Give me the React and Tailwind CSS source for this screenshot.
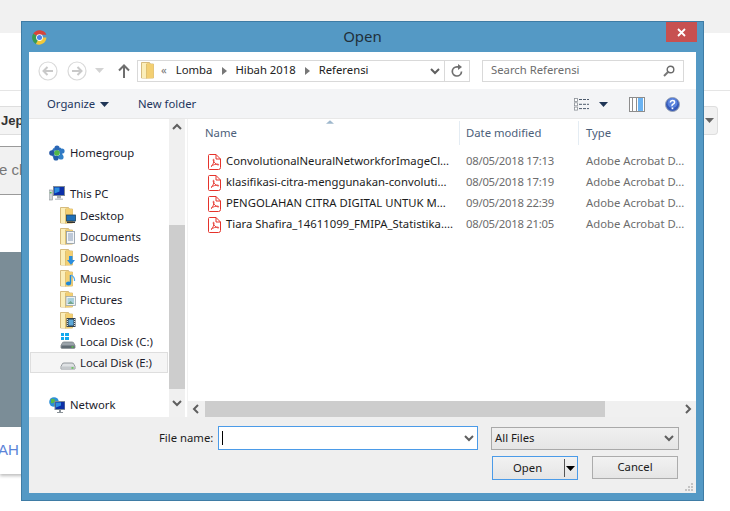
import React from "react";

const Chevron = ({ dir = "down", className = "" }) => {
  const d = { down: "M1 3l4 4 4-4", up: "M1 7l4-4 4 4", left: "M7 1L3 5l4 4", right: "M3 1l4 4-4 4" }[dir];
  return (
    <svg width="10" height="10" viewBox="0 0 10 10" className={`shrink-0 ${className}`}>
      <path d={d} fill="none" stroke="#5f5f5f" strokeWidth="2" />
    </svg>
  );
};

const Caret = ({ color = "#1f3556", w = 9 }) => (
  <svg width={w} height="5" viewBox="0 0 9 5" className="shrink-0">
    <path d="M0 0h9L4.500 5z" fill={color} />
  </svg>
);

const Chrome = () => (
  <svg width="15" height="15" viewBox="0 0 16 16">
    <path d="M8 8L1.300 4A8 8 0 0 1 15.400 5H8z" fill="#d8443a" />
    <path d="M8 8l-3.900 7A8 8 0 0 1 1.300 4z" fill="#3a9b4e" />
    <path d="M8 8h7.400A8 8 0 0 1 4.100 15z" fill="#f1c83a" />
    <circle cx="8" cy="8" r="3.600" fill="#fff" />
    <circle cx="8" cy="8" r="2.700" fill="#4a83ea" />
  </svg>
);

const NavCircle = ({ flip }) => (
  <svg width="20" height="20" viewBox="0 0 20 20" style={flip ? { transform: "scaleX(-1)" } : undefined}>
    <circle cx="10" cy="10" r="9" fill="#fff" stroke="#d9d9d9" strokeWidth="1.200" />
    <path d="M15 10H6M9.500 6L5.500 10l4 4" fill="none" stroke="#c9c9c9" strokeWidth="2" />
  </svg>
);

const Folder = ({ children }) => (
  <svg width="16" height="17" viewBox="0 0 16 17" className="shrink-0">
    <path d="M.5.5h8l1 1.500h3v14h-12z" fill="#efd07f" stroke="#cdb06c" strokeWidth=".8" />
    <rect x="1" y="1" width="4.500" height="15" fill="#fbeeb9" />
    <path d="M5.500 2l7-.0v14l-7 .500z" fill="#f3cf72" />
    <path d="M5.500 2v14.500" stroke="#d6b768" strokeWidth=".7" />
    {children}
  </svg>
);

const overlays = {
  Desktop: (
    <g>
      <rect x="6.500" y="8" width="9" height="6" fill="#1f6fb8" stroke="#20455f" strokeWidth=".8" />
      <rect x="7" y="14.500" width="8" height="1.500" fill="#333" />
    </g>
  ),
  Documents: (
    <g>
      <rect x="6.500" y="3.500" width="8" height="12" fill="#f4f6f8" stroke="#8d99a5" strokeWidth=".8" />
      <path d="M8 6h5M8 8h5M8 10h5M8 12h5" stroke="#6c86a6" strokeWidth=".8" />
    </g>
  ),
  Downloads: <path d="M9 7h3.500v4H15l-4 5-4-5h2z" fill="#2b8ddd" />,
  Music: (
    <g>
      <path d="M10.500 5v8" stroke="#1e88d8" strokeWidth="1.500" />
      <path d="M11 5q4 2 3.500 6" stroke="#4eaaf0" strokeWidth="1.200" fill="none" />
      <ellipse cx="8.500" cy="13.500" rx="2.600" ry="2" fill="#1e88d8" />
    </g>
  ),
  Pictures: (
    <g>
      <rect x="6" y="5.500" width="9.500" height="9" fill="#eef2f3" stroke="#9aa6ad" strokeWidth=".8" />
      <rect x="7.500" y="7" width="6.500" height="6" fill="#a8cfdc" />
      <path d="M7.500 13l3-3 3.500 3z" fill="#74a58b" />
    </g>
  ),
  Videos: (
    <g>
      <rect x="6.500" y="6" width="9" height="9" fill="#33424f" />
      <rect x="8.500" y="7.500" width="5" height="6" fill="#5da8d8" />
      <path d="M7.400 7v7M14.600 7v7" stroke="#fff" strokeWidth=".9" strokeDasharray="1 1" />
    </g>
  ),
};

const Drive = ({ win }) => (
  <svg width="16" height="17" viewBox="0 0 16 17" className="shrink-0">
    {win && <path d="M1 0h3v3H1zM5 0h4v3H5zM1 4h3v3H1zM5 4h4v3H5z" fill="#12a9ee" />}
    <path d="M2 10.500q.3-1.500 2-1.500h8q1.700 0 2 1.500l1 2v2.500H1v-2.500z" fill={win ? "#9aa3aa" : "#dfe2e4"} stroke="#7c8388" strokeWidth=".8" />
    <rect x="1.400" y="12.500" width="13.200" height="3" fill={win ? "#5f6b73" : "#c4c8cb"} />
    <rect x="11.500" y="13.200" width="2" height="1.500" fill="#5cc24e" />
  </svg>
);

const Homegroup = () => (
  <svg width="16" height="16" viewBox="0 0 16 16" className="shrink-0">
    <path d="M5 4.500L11 4l1.500 7L6 13 3 8z" fill="none" stroke="#2f78c0" strokeWidth="2.400" />
    <circle cx="8" cy="3" r="2.600" fill="#2a66b5" />
    <circle cx="13" cy="6" r="2.600" fill="#2f78c4" />
    <circle cx="3" cy="8" r="2.800" fill="#2557a5" />
    <circle cx="12" cy="12" r="2.600" fill="#3080c8" />
    <circle cx="7" cy="13" r="2.600" fill="#235ea8" />
    <circle cx="8" cy="8" r="2.800" fill="#52b848" />
  </svg>
);

const PC = () => (
  <svg width="16" height="15" viewBox="0 0 16 15" className="shrink-0">
    <rect x="0" y="4" width="3.500" height="10" fill="#cfd3d6" stroke="#8a9095" strokeWidth=".6" />
    <rect x=".8" y="6" width="1.800" height="1.400" fill="#58c04e" />
    <rect x="4.500" y="0.500" width="11" height="9" fill="#0b2fa8" stroke="#7f8b96" />
    <path d="M5.500 1.500h5v4l-5 2z" fill="#2d8fe0" />
    <path d="M8 10h4v2.500H8z" fill="#a8aeb3" />
    <rect x="6" y="12.500" width="8" height="1.500" fill="#c6cacd" />
  </svg>
);

const Network = () => (
  <svg width="16" height="16" viewBox="0 0 16 16" className="shrink-0">
    <circle cx="5" cy="5" r="4.800" fill="#2c8fd8" />
    <path d="M2 2q3-1 4 1t-2 3-2-1zM6 6q3 0 2 3H5z" fill="#58b84a" />
    <rect x="6" y="4.500" width="10" height="8" fill="#0c2fa6" stroke="#7d8a96" />
    <path d="M7 5.500h5v3l-5 2z" fill="#2e8de0" />
    <path d="M10 12.500h2V15h-2zM8 15h6v1H8z" fill="#8b9298" />
  </svg>
);

const Pdf = () => (
  <svg width="13" height="16" viewBox="0 0 13 16" className="shrink-0">
    <path d="M1.500.5h6.500l4.500 4.500v8.500a2 2 0 0 1-2 2h-9a1 1 0 0 1-1-1V1.500a1 1 0 0 1 1-1z" fill="#fff" stroke="#e5332b" />
    <path d="M8 .5V5h4.500" fill="none" stroke="#e5332b" />
    <path d="M3 12.500c1.500-.8 3-4 3-6.500 0-1-1-1-.9 0C5.300 8 8 10.500 10 11c1 .2 1-.8 0-.9-2-.2-5.500.8-7 2.400z" fill="none" stroke="#e5332b" strokeWidth=".9" />
  </svg>
);

const NavRow = ({ icon, label, indent, selected, className = "" }) => (
  <div
    className={`flex h-[21px] items-center ${indent ? "pl-[30px]" : "pl-[19px]"} ${
      selected ? "bg-[#f5f5f5] outline outline-[#dedede] -outline-offset-1" : ""
    } ${className}`}
  >
    <div className={`flex ${indent ? "w-[20px]" : "w-[21px]"} shrink-0 items-center`}>{icon}</div>
    <span className="text-[11.3px] leading-none whitespace-nowrap text-[#1b1b2b]">{label}</span>
  </div>
);

const files = [
  ["ConvolutionalNeuralNetworkforImageCl...", "08/05/2018 17:13"],
  ["klasifikasi-citra-menggunakan-convoluti...", "08/05/2018 17:19"],
  ["PENGOLAHAN CITRA DIGITAL UNTUK M...", "09/05/2018 22:39"],
  ["Tiara Shafira_14611099_FMIPA_Statistika....", "08/05/2018 21:05"],
];

const Arrow = ({ className = "" }) => (
  <svg width="5" height="8" viewBox="0 0 5 8" className={`shrink-0 ${className}`}>
    <path d="M0 0l5 4-5 4z" fill="#777" />
  </svg>
);

export default function App() {
  return (
    <div className="relative h-[511px] w-[730px] overflow-hidden bg-white font-['Noto_Sans','Open_Sans',sans-serif]">
      {/* Page behind the dialog */}
      <div className="h-[33px] bg-[#f1f1f1]" />
      <div className="h-[58px] border-b border-[#e5e5e5]" />
      <div className="mt-[15px] flex h-[29px] w-[718px]">
        <div className="flex flex-1 items-center border-y border-[#dedede] bg-[#f4f4f4] pl-[1px] font-['Liberation_Sans'] text-[13px] font-bold text-[#333]">
          Jep
        </div>
        <div className="flex w-[14px] items-center justify-end rounded-r border-y border-r border-[#dedede] bg-[#f1f1f1] pr-[3px]">
          <Caret color="#666" />
        </div>
      </div>
      <div className="mt-[11px] flex h-[49px] w-[690px] items-center border-y border-[#9a9a9a] bg-[#f1f1f1] font-['Liberation_Sans'] text-[15px] text-[#777]">
        <span className="-ml-[1px]">e ch</span>
      </div>
      <div className="mt-[57px] h-[175px] w-[690px] bg-[#7b8d97]" />
      <div className="flex h-[47px] w-[690px] items-center font-['Liberation_Sans'] text-[15px] text-[#5b84d8] shadow-[0_2px_3px_rgba(0,0,0,0.25)]">
        <span className="-ml-[2px]">AH</span>
      </div>

      {/* Dialog window */}
      <div className="absolute top-[21px] left-[21px] flex h-[480px] w-[683px] flex-col border border-[#3f7ca5] bg-[#5499c5] px-[7px] pb-[7px]">
        <div className="relative flex h-[30px] shrink-0 items-center">
          <div className="ml-[3px] flex"><Chrome /></div>
          <div className="absolute inset-x-0 top-[4px] text-center text-[15px] leading-[20px] text-[#21303b]">Open</div>
          <div className="absolute top-0 right-[-1px] flex h-[20px] w-[31px] items-center justify-center bg-[#c75050]">
            <svg width="9" height="9" viewBox="0 0 9 9">
              <path d="M1 1l7 7M8 1L1 8" stroke="#fff" strokeWidth="1.800" />
            </svg>
          </div>
        </div>

        <div className="flex min-h-0 flex-1 flex-col bg-[#efefef]">
          {/* Navigation row */}
          <div className="flex h-[37px] shrink-0 items-center bg-white">
            <div className="ml-[9px] flex"><NavCircle /></div>
            <div className="ml-[9px] flex"><NavCircle flip /></div>
            <div className="ml-[8px] flex"><Caret color="#d3d3d3" /></div>
            <svg width="12" height="14" viewBox="0 0 12 14" className="ml-[14px] shrink-0">
              <path d="M6 14V2M1 6.500L6 1.500l5 5" fill="none" stroke="#6e6e6e" strokeWidth="2" />
            </svg>
            <div className="ml-[7px] flex h-[22px] w-[333px] shrink-0 items-center border border-[#d9d9d9] text-[11.3px] text-[#222]">
              <div className="ml-[3px] flex"><Folder /></div>
              <span className="ml-[4px] text-[#777]">«</span>
              <span className="ml-[9px]">Lomba</span>
              <Arrow className="ml-[10px]" />
              <span className="ml-[8px]">Hibah 2018</span>
              <Arrow className="ml-[9px]" />
              <span className="ml-[9px]">Referensi</span>
              <Chevron className="mr-[4px] ml-auto" />
              <div className="flex h-full w-[25px] shrink-0 items-center justify-center border-l border-[#d9d9d9]">
                <svg width="12" height="13" viewBox="0 0 12 13">
                  <path d="M10.500 7.500A4.600 4.600 0 1 1 6 2.800h2" fill="none" stroke="#6f6f6f" strokeWidth="1.700" />
                  <path d="M7 0l4 3-4 3z" fill="#6f6f6f" />
                </svg>
              </div>
            </div>
            <div className="ml-[12px] flex h-[22px] w-[202px] shrink-0 items-center justify-between border border-[#d9d9d9] px-[8px]">
              <span className="text-[11.3px] text-[#6d6d6d]">Search Referensi</span>
              <svg width="12" height="12" viewBox="0 0 12 12">
                <circle cx="7.500" cy="4.500" r="3.300" fill="none" stroke="#6a6a6a" strokeWidth="1.400" />
                <path d="M5 7l-4 4" stroke="#777" strokeWidth="2" />
              </svg>
            </div>
          </div>

          {/* Toolbar */}
          <div className="flex h-[30px] shrink-0 items-center border-b border-[#e8e8e8] bg-[#f3f4f6] pt-[1px]">
            <span className="ml-[18px] w-[53px] text-[11.3px] text-[#23375e]">Organize</span>
            <Caret />
            <span className="ml-[29px] text-[11.3px] text-[#23375e]">New folder</span>
            <svg width="15" height="13" viewBox="0 0 15 13" className="ml-auto shrink-0">
              <rect x=".5" y=".5" width="3" height="3" fill="#fff" stroke="#8a8f96" strokeWidth=".8" />
              <rect x=".5" y="4.800" width="3" height="3" fill="#fff" stroke="#8a8f96" strokeWidth=".8" />
              <rect x=".5" y="9.100" width="3" height="3" fill="#fff" stroke="#8a8f96" strokeWidth=".8" />
              <path d="M5 1.500h10M5 6.300h10M5 10.600h10" stroke="#4d5a6c" strokeDasharray="3 1" />
            </svg>
            <div className="ml-[10px] flex"><Caret /></div>
            <div className="relative ml-[21px] flex h-[15px] w-[16px] border border-[#8d8d8d] bg-white">
              <div className="ml-[2px] h-full w-[1px] bg-[#8d8d8d]" />
              <div className="ml-[3px] h-full w-[1px] bg-[#8d8d8d]" />
              <div className="ml-[1px] h-full w-[5px] bg-[#6bb3f2]" />
            </div>
            <svg width="15" height="15" viewBox="0 0 15 15" className="mr-[16px] ml-[20px] shrink-0">
              <circle cx="7.500" cy="7.500" r="7" fill="#3559b8" stroke="#9aa5b5" />
              <circle cx="7.500" cy="6" r="5" fill="#5a83dd" />
              <path d="M5.300 5.500q.3-2 2.300-2t2 1.700q0 1.200-1.500 2t-.8 1.800" fill="none" stroke="#fff" strokeWidth="1.500" />
              <rect x="6.600" y="10.500" width="1.700" height="1.700" fill="#fff" />
            </svg>
          </div>

          {/* Main area */}
          <div className="flex h-[298px] shrink-0 bg-white">
            <div className="flex w-[140px] shrink-0 flex-col pt-[23px] pr-[1px] pl-[1px]">
              <NavRow icon={<Homegroup />} label="Homegroup" />
              <NavRow icon={<PC />} label="This PC" className="mt-[20px] mb-[1px]" />
              <NavRow indent icon={<Folder>{overlays.Desktop}</Folder>} label="Desktop" />
              <NavRow indent icon={<Folder>{overlays.Documents}</Folder>} label="Documents" />
              <NavRow indent icon={<Folder>{overlays.Downloads}</Folder>} label="Downloads" />
              <NavRow indent icon={<Folder>{overlays.Music}</Folder>} label="Music" />
              <NavRow indent icon={<Folder>{overlays.Pictures}</Folder>} label="Pictures" />
              <NavRow indent icon={<Folder>{overlays.Videos}</Folder>} label="Videos" />
              <NavRow indent icon={<Drive win />} label="Local Disk (C:)" />
              <NavRow indent selected icon={<Drive />} label="Local Disk (E:)" />
              <NavRow icon={<Network />} label="Network" className="mt-[21px]" />
            </div>
            <div className="flex w-[16px] shrink-0 flex-col items-center justify-between bg-[#f0f0f0]">
              <Chevron dir="up" className="mt-[3px]" />
              <div className="mt-[93px] w-full flex-1 bg-[#cdcdcd]" />
              <div className="flex h-[28px] items-center"><Chevron /></div>
            </div>
            <div className="ml-[2px] flex min-w-0 flex-1 flex-col border-l border-[#f2f2f2]">
              <div className="relative flex h-[26px] shrink-0 pt-[2px] text-[11.3px] text-[#4c607a]">
                <svg width="8" height="4" viewBox="0 0 9 4" className="absolute top-[1px] left-[138px]">
                  <path d="M0 4l4.500-4L9 4z" fill="#9fb8cd" />
                </svg>
                <div className="flex w-[272px] items-center border-r border-[#e4ecf3] pl-[17px]">Name</div>
                <div className="flex w-[119px] items-center border-r border-[#e4ecf3] pl-[6px]">Date modified</div>
                <div className="flex flex-1 items-center pl-[7px]">Type</div>
              </div>
              <div className="flex flex-1 flex-col pt-[6px]">
                {files.map(([name, date]) => (
                  <div key={name} className="flex h-[21px] items-center text-[11.3px]">
                    <div className="flex w-[272px] items-center pl-[20px] whitespace-nowrap text-[#1c1c1c]">
                      <Pdf />
                      <span className="ml-[5px]">{name}</span>
                    </div>
                    <div className="w-[119px] pl-[6px] tracking-[-0.25px] whitespace-nowrap text-[#6d6d6d]">{date}</div>
                    <div className="pl-[7px] whitespace-nowrap text-[#6d6d6d]">Adobe Acrobat D...</div>
                  </div>
                ))}
              </div>
              <div className="flex h-[16px] shrink-0 items-center bg-[#f0f0f0]">
                <Chevron dir="left" className="ml-[3px]" />
                <div className="ml-[4px] h-full w-[400px] bg-[#cdcdcd]" />
                <Chevron dir="right" className="mr-[3px] ml-auto" />
              </div>
            </div>
          </div>

          {/* Bottom form */}
          <div className="relative flex-1 text-[11.3px] text-[#1b1b1b]">
            <div className="mt-[9px] flex h-[24px] items-center">
              <span className="ml-[130px] w-[59px] whitespace-nowrap">File name:</span>
              <div className="flex h-[24px] w-[260px] items-center border border-[#4b9be8] bg-white pl-[3px]">
                <div className="h-[14px] w-[1px] bg-black" />
                <Chevron className="mr-[3px] ml-auto" />
              </div>
              <div className="ml-[13px] flex h-[23px] w-[188px] items-center justify-between border border-[#a9a9a9] bg-gradient-to-b from-[#f0f0f0] to-[#e5e5e5] pr-[4px] pl-[3px]">
                <span>All Files</span>
                <Chevron />
              </div>
            </div>
            <div className="mt-[6px] flex items-start">
              <div className="ml-[463px] flex h-[24px] w-[86px] items-center border border-[#4b9be8] bg-gradient-to-b from-[#f2f2f2] to-[#e5e5e5]">
                <span className="ml-[20px] w-[51px]">Open</span>
                <div className="h-[18px] w-[1px] shrink-0 bg-[#555]" />
                <div className="ml-[1px] flex"><Caret color="#000" /></div>
              </div>
              <div className="ml-[14px] flex h-[23px] w-[86px] items-center justify-center border border-[#acacac] bg-gradient-to-b from-[#f2f2f2] to-[#e5e5e5]">
                Cancel
              </div>
            </div>
            <svg width="8" height="9" viewBox="0 0 8 9" className="absolute right-[3px] bottom-[1px]">
              <path d="M6 0h2v2H6zM3 3h2v2H3zM6 3h2v2H6zM0 6h2v2H0zM3 6h2v2H3zM6 6h2v2H6z" fill="#c4c4c4" />
            </svg>
          </div>
        </div>
      </div>
    </div>
  );
}
